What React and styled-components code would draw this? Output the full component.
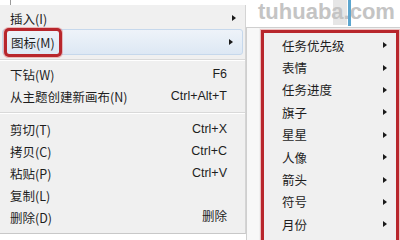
import React from 'react';
import styled, { createGlobalStyle } from 'styled-components';

const GlobalStyle = createGlobalStyle`
  html, body {
    margin: 0;
    padding: 0;
    background: #ffffff;
  }
  body {
    font-family: "Noto Sans CJK SC", "Liberation Sans", sans-serif;
    color: #1e1e1e;
  }
`;

const Canvas = styled.div`
  width: 400px;
  height: 240px;
  overflow: hidden;
  display: flex;
  align-items: flex-start;
  background: #ffffff;
`;

const LeftColumn = styled.div`
  width: 246px;
  display: flex;
  flex-direction: column;
`;

const TopStrip = styled.div`
  height: 5px;
  padding-left: 10px;
`;

const Tick = styled.div`
  width: 1px;
  height: 5px;
  background: #9a9a9a;
`;

const Menu = styled.div`
  background: #f0f0f0;
  border-right: 1px solid #d4d4d4;
  padding: 2px 0 6px;
  border-bottom: 1px solid #c8c8c8;
  height: 229px;
  box-sizing: border-box;
`;

const Row = styled.div`
  display: flex;
  align-items: center;
  height: ${p => (p.tall ? 24 : 22)}px;
  padding: 0 8px 0 10px;
  margin: ${p => (p.active ? '0 2px 0 2px' : '0')};
  padding-left: ${p => (p.active ? 8 : 10)}px;
  font-size: 12.5px;
  line-height: 17px;
  border-radius: 3px;
  border: ${p => (p.active ? '1px solid #c6d8ec' : 'none')};
  background: ${p => (p.active ? 'linear-gradient(#eef3f9, #dde8f4)' : 'transparent')};
`;

const Label = styled.span`
  flex: 1;
  white-space: nowrap;
`;

const Marked = styled.span`
  padding: 2px 4px;
  margin: -2px -4px;
  border-radius: 2px;
  box-shadow: 0 0 0 3px #b8262c, 0 0 0 4px rgba(225, 120, 120, 0.45);
`;

const Shortcut = styled.span`
  font-family: "Liberation Sans", "Noto Sans CJK SC", sans-serif;
  font-size: 12.5px;
  margin-right: 10px;
  white-space: nowrap;
`;

const Arrow = styled.span`
  width: 0;
  height: 0;
  border-top: 3.5px solid transparent;
  border-bottom: 3.5px solid transparent;
  border-left: 4px solid #1a1a1a;
  margin-right: ${p => p.gap || 0}px;
`;

const Separator = styled.div`
  height: 1px;
  margin: ${p => p.space || '4px 0'};
  background: #d9d9d9;
  border-bottom: 1px solid #ffffff;
`;

const RightColumn = styled.div`
  flex: 1;
  display: flex;
  flex-direction: column;
`;

const Header = styled.div`
  position: relative;
  height: 27px;
  display: flex;
  align-items: flex-start;
  padding-left: 12px;
`;

const Watermark = styled.div`
  position: relative;
  z-index: 1;
  font-family: "Liberation Sans", Arial, sans-serif;
  font-weight: bold;
  font-size: 22px;
  line-height: 24px;
  letter-spacing: 0px;
  color: #c4c4c4;
`;

const Backdrop = styled.div`
  position: absolute;
  top: 0;
  left: 87px;
  width: 14px;
  height: 25px;
  background: #e6e6e6;
`;

const BlueLine = styled.div`
  position: absolute;
  top: 0;
  left: 102px;
  width: 3px;
  height: 26px;
  background: #5ca6cf;
  z-index: 2;
`;

const Submenu = styled.div`
  flex: 1;
  height: 213px;
  background: #f0f0f0;
  border-left: 1px solid #cfcfcf;
  border-top: 1px solid #cfcfcf;
  padding: 2px 1px 0 14px;
  box-shadow: inset 12px 0 0 #f8f8f8;
`;

const Frame = styled.div`
  height: 240px;
  border: 3px solid #b8262c;
  border-bottom: none;
  box-shadow: 0 0 0 1px rgba(230, 140, 140, 0.5);
  padding-top: 1px;
`;

const SubRow = styled.div`
  display: flex;
  align-items: center;
  height: 22.4px;
  padding: 0 9px 0 18px;
  font-size: 12.5px;
  line-height: 17px;
`;

const mainItems = [
  { section: 1, label: '插入(I)', arrow: true },
  { section: 1, label: '图标(M)', arrow: true, active: true },
  { section: 2, label: '下钻(W)', key: 'F6' },
  { section: 2, label: '从主题创建新画布(N)', key: 'Ctrl+Alt+T' },
  { section: 3, label: '剪切(T)', key: 'Ctrl+X' },
  { section: 3, label: '拷贝(C)', key: 'Ctrl+C' },
  { section: 3, label: '粘贴(P)', key: 'Ctrl+V' },
  { section: 3, label: '复制(L)' },
  { section: 3, label: '删除(D)', key: '删除' },
];

const subItems = ['任务优先级', '表情', '任务进度', '旗子', '星星', '人像', '箭头', '符号', '月份'];

const MenuRow = ({ item }) => (
  <Row tall={item.active} active={item.active}>
    <Label>{item.active ? <Marked>{item.label}</Marked> : item.label}</Label>
    {item.key && <Shortcut>{item.key}</Shortcut>}
    {item.arrow && <Arrow gap={1} />}
  </Row>
);

export default function App() {
  const sections = [1, 2, 3];
  return (
    <>
      <GlobalStyle />
      <Canvas>
        <LeftColumn>
          <TopStrip><Tick /></TopStrip>
          <Menu>
            {sections.map((s, i) => (
              <React.Fragment key={s}>
                {i > 0 && <Separator space={i === 1 ? '4px 0 2px' : '5px 0 4px'} />}
                {mainItems.filter(m => m.section === s).map(m => (
                  <MenuRow key={m.label} item={m} />
                ))}
              </React.Fragment>
            ))}
          </Menu>
        </LeftColumn>
        <RightColumn>
          <Header>
            <Backdrop />
            <BlueLine />
            <Watermark>tuhuaba.com</Watermark>
          </Header>
          <Submenu>
            <Frame>
              {subItems.map(name => (
                <SubRow key={name}>
                  <Label>{name}</Label>
                  <Arrow />
                </SubRow>
              ))}
            </Frame>
          </Submenu>
        </RightColumn>
      </Canvas>
    </>
  );
}
